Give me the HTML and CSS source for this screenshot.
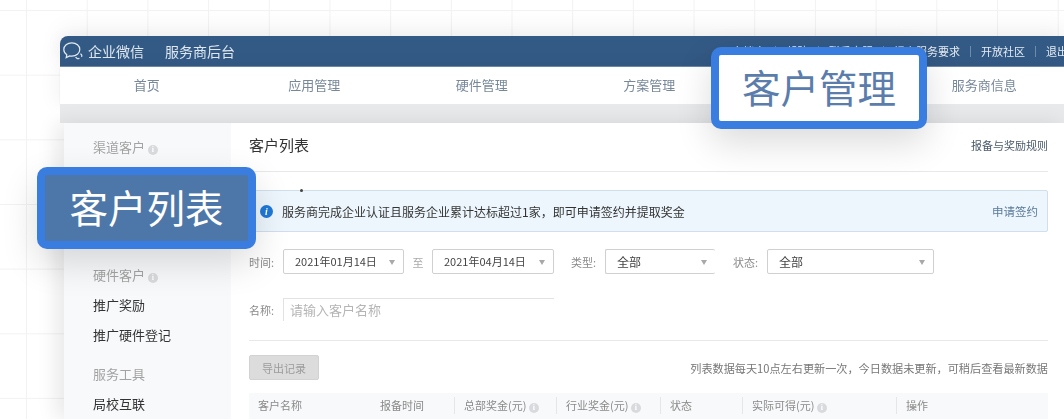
FILE: index.html
```html
<!DOCTYPE html>
<html lang="zh">
<head>
<meta charset="utf-8">
<title>客户列表</title>
<link rel="stylesheet" href="styles.css">
</head>
<body>
<div class="app">
  <header class="topbar">
    <svg class="logo" viewBox="0 0 20 18" width="20" height="18" fill="none" stroke="#e4ebf2" stroke-width="1.2">
      <path d="M8.8.9C4.3.9.8 3.8.8 7.5c0 2.2 1.2 4 3 5.2l-.6 2.9 3.4-1.7c.7.2 1.4.3 2.2.3 4.5 0 8-2.9 8-6.7S13.3.9 8.8.9z"/>
      <path d="M12.6 15.2c1.2 1.6 2.6 2 3.8 1M17.4 11.8c1.3.8 1.9 2 1.1 3"/>
    </svg>
    <span class="brand">企业微信</span>
    <span class="brand-sub">服务商后台</span>
    <nav class="toplinks">
      <span>文档库</span><i></i><span>帮助</span><i></i><span>联系客服</span><i></i><span>提交服务要求</span><i></i><span>开放社区</span><i></i><span>退出</span>
    </nav>
  </header>
  <nav class="mainnav">
    <span>首页</span><span>应用管理</span><span>硬件管理</span><span>方案管理</span><span></span><span>服务商信息</span>
  </nav>
  <div class="strip"></div>
  <div class="panel">
    <aside class="sidebar">
      <section class="group group-first">
        <h4>渠道客户 <b class="info">i</b></h4>
        <p></p><p></p><p></p>
      </section>
      <section class="group">
        <h4>硬件客户 <b class="info">i</b></h4>
        <p>推广奖励</p><p>推广硬件登记</p>
      </section>
      <section class="group">
        <h4>服务工具</h4>
        <p>局校互联</p>
      </section>
    </aside>
    <main class="content">
      <div class="title-row">
        <h2>客户列表</h2>
        <a>报备与奖励规则</a>
      </div>
      <div class="banner">
        <span class="tick"></span>
        <b class="banner-icon">i</b>
        <span class="banner-text">服务商完成企业认证且服务企业累计达标超过1家，即可申请签约并提取奖金</span>
        <a>申请签约</a>
      </div>
      <div class="filters">
        <label class="lab">时间:</label>
        <div class="sel sel-d1">2021年01月14日<u></u></div>
        <span class="to">至</span>
        <div class="sel sel-d2">2021年04月14日<u></u></div>
        <label class="lab lab-type">类型:</label>
        <div class="sel sel-t">全部<u></u></div>
        <label class="lab lab-state">状态:</label>
        <div class="sel sel-s">全部<u></u></div>
      </div>
      <div class="name-row">
        <label class="lab">名称:</label>
        <div class="name-input">请输入客户名称</div>
      </div>
      <div class="action-row">
        <button class="export">导出记录</button>
        <span class="note">列表数据每天10点左右更新一次，今日数据未更新，可稍后查看最新数据</span>
      </div>
      <div class="thead">
        <span>客户名称</span>
        <span>报备时间</span>
        <span class="sep">总部奖金(元) <b class="info">i</b></span>
        <span class="sep">行业奖金(元) <b class="info">i</b></span>
        <span class="sep">状态</span>
        <span class="sep">实际可得(元) <b class="info">i</b></span>
        <span class="sep">操作</span>
      </div>
    </main>
  </div>
</div>
<div class="callout callout-nav">客户管理</div>
<div class="callout callout-side">客户列表</div>
</body>
</html>
```
FILE: styles.css
```css
* { box-sizing: border-box; }
html, body { margin: 0; height: 419px; overflow: hidden; }
body {
  position: relative;
  padding: 36px 0 0 60px;
  font-family: "Noto Sans CJK SC", "Liberation Sans", sans-serif;
  background-color: #fff;
  background-image:
    linear-gradient(to right, #f2f2f2 1px, transparent 1px),
    linear-gradient(to bottom, #f2f2f2 1px, transparent 1px);
  background-size: 60.7px 64.67px;
  background-position: 26px 10px;
}
.app {
  width: 1008px;
  height: 383px;
  display: flex;
  flex-direction: column;
  filter: blur(.5px);
}
.topbar {
  height: 31px;
  flex: none;
  display: flex;
  align-items: center;
  padding-left: 3px;
  background: #335a85;
  border-bottom: 1px solid #6f8cab;
  border-radius: 8px 0 0 0;
  color: #dfe7f0;
  font-size: 14px;
  box-shadow: 0 -8px 24px rgba(0,0,0,.05), -4px 0 20px rgba(0,0,0,.05);
}
.logo { flex: none; }
.brand { margin-left: 5px; }
.brand-sub { margin-left: 21px; }
.toplinks {
  margin-left: auto;
  display: flex;
  align-items: center;
  font-size: 11px;
  white-space: nowrap;
  color: #e6ecf3;
}
.toplinks i { width: 1px; height: 11px; background: #6f8cab; margin: 0 10px; flex: none; }
.mainnav {
  height: 37px;
  flex: none;
  display: grid;
  grid-template-columns: repeat(6, 167.5px);
  align-items: center;
  justify-items: center;
  padding: 0 0 2px 3px;
  background: #fff;
  color: #77889a;
  font-size: 13px;
  box-shadow: 0 1px 2px rgba(0,0,0,.08), -4px 0 20px rgba(0,0,0,.05);
}
.strip { height: 19px; flex: none; background: #e8e9eb; }
.panel {
  flex: 1;
  margin-left: 4px;
  display: flex;
  border-radius: 4px 0 0 0;
  background: #fff;
  box-shadow: -8px 0 20px rgba(0,0,0,.09);
  min-height: 0;
}
.sidebar {
  width: 167px;
  flex: none;
  padding: 14px 0 0 29px;
  background: #f8f9fb;
  font-size: 13px;
  color: #333;
}
.group { margin-bottom: 14px; }
.group-first { margin-bottom: 13px; }
.group h4 { margin: 0 0 5px; height: 20px; line-height: 20px; font-size: 13px; font-weight: 400; color: #a3a3a3; }
.group p { margin: 0; height: 30px; line-height: 30px; }
.info {
  display: inline-block;
  width: 10px; height: 10px;
  border-radius: 50%;
  background: #d8dadd;
  color: #fff;
  font: 700 8px/10px "Liberation Serif", serif;
  text-align: center;
  vertical-align: 0;
}
.content {
  flex: 1;
  min-width: 0;
  padding: 0 20px 0 18px;
  font-size: 12px;
}
.title-row {
  height: 49px;
  display: flex;
  align-items: center;
  justify-content: space-between;
  border-bottom: 1px solid #e6e8ea;
  padding-bottom: 5px;
}
.title-row h2 { margin: 0; font-size: 15px; font-weight: 400; color: #333; }
.title-row a { font-size: 11px; color: #4a5a6c; }
.banner {
  position: relative;
  margin-top: 18px;
  height: 42px;
  display: flex;
  align-items: center;
  padding: 0 9px 0 10px;
  background: #edf6fd;
  border: 1px solid #d0dfeb;
  border-radius: 2px;
  font-size: 12px;
  color: #333;
}
.tick { position: absolute; left: 50px; top: -2px; width: 3px; height: 3px; background: #444; border-radius: 50%; }
.banner-icon {
  flex: none;
  width: 13px; height: 13px;
  border-radius: 50%;
  background: #1f78d8;
  color: #fff;
  font: italic 700 10px/13px "Liberation Serif", serif;
  text-align: center;
}
.banner-text { margin-left: 9px; }
.banner a { margin-left: auto; color: #5b7a99; font-size: 11.5px; }
.filters { margin-top: 17px; height: 25px; display: flex; align-items: center; }
.lab { color: #8a8a8a; font-size: 11px; width: 34px; flex: none; }
.sel {
  position: relative;
  height: 25px;
  line-height: 23px;
  flex: none;
  padding-left: 11px;
  border: 1px solid #d0d0d0;
  border-radius: 2px;
  color: #444;
  font-size: 11px;
  background: #fff;
}
.sel u {
  position: absolute;
  right: 8px; top: 10px;
  border: 3.5px solid transparent;
  border-top: 5px solid #a8a8a8;
  border-bottom: 0;
}
.sel-d1 { width: 121px; }
.sel-d2 { width: 122px; }
.to { width: 28px; flex: none; text-align: center; color: #aaa; font-size: 11px; }
.lab-type { margin-left: 17px; }
.sel-t { width: 110px; border-right: 0; font-size: 12px; }
.lab-state { margin-left: 18px; }
.sel-s { width: 167px; font-size: 12px; }
.name-row { margin-top: 24px; height: 23px; display: flex; align-items: center; }
.name-input {
  width: 271px;
  height: 23px;
  line-height: 21px;
  padding-left: 6px;
  border-top: 1px solid #e2e2e2;
  border-left: 1px solid #e2e2e2;
  color: #b5b5b5;
  font-size: 13px;
}
.action-row {
  margin-top: 19px;
  padding-top: 14px;
  border-top: 1px solid #e6e8ea;
  display: flex;
  align-items: center;
  justify-content: space-between;
}
.export {
  width: 70px; height: 25px;
  padding: 0;
  border: 1px solid #d2d2d2;
  border-radius: 2px;
  background: #dcdcdc;
  color: #9c9c9c;
  font: inherit;
  font-size: 11px;
}
.note { color: #777; font-size: 11.15px; white-space: nowrap; }
.thead {
  margin-top: 13px;
  height: 30px;
  display: grid;
  grid-template-columns: 122px 83px 102px 104px 82px 154px 1fr;
  align-items: start;
  padding-top: 4px;
  background: #f8f9fa;
  color: #8a8a8a;
  font-size: 11px;
}
.thead span { padding-left: 9px; white-space: nowrap; height: 17px; line-height: 17px; }
.thead .sep { border-left: 1px solid #e4e6e8; }
.callout {
  position: absolute;
  height: 82px;
  display: flex;
  align-items: center;
  justify-content: center;
  padding-bottom: 3px;
  border: 8px solid #3a7de0;
  border-radius: 10px;
  font-size: 38.5px;
  line-height: 1;
  box-shadow: 0 14px 36px rgba(0,0,0,.14);
}
.callout-nav { left: 711px; top: 47px; width: 216px; background: #fff; color: #5a7dab; }
.callout-side { left: 37px; top: 167px; width: 219px; background: #4c77a8; color: #fff; }
```
